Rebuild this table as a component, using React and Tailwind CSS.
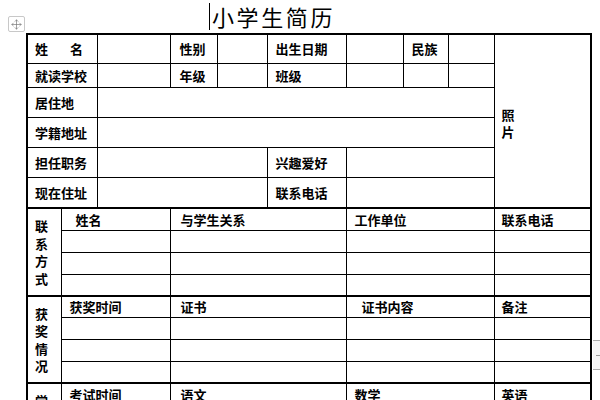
import React from 'react';
import { Move } from 'lucide-react';

const cols = [34, 36, 73, 47, 50, 79, 57, 45, 46, 97];

function C({ children, span = 1, rows = 1, pl = 'pl-[7px]', className = '' }) {
  return (
    <td
      colSpan={span}
      rowSpan={rows}
      className={`border border-black p-0 align-middle whitespace-nowrap ${pl} ${className}`}
    >
      {children}
    </td>
  );
}

function Vert({ text }) {
  return (
    <div className="flex flex-col leading-[17.5px]">
      {text.split('').map((ch, i) => (
        <span key={i}>{ch}</span>
      ))}
    </div>
  );
}

export default function App() {
  const blanks = (n) =>
    Array.from({ length: n }).map((_, i) => (
      <tr key={i} className="h-[22px]">
        <C span={2} />
        <C span={3} />
        <C span={3} />
        <C />
      </tr>
    ));

  return (
    <div className="relative w-[600px] h-[400px] overflow-hidden bg-white text-black font-['Noto_Sans_CJK_SC',sans-serif]">
      {/* 表格拖动手柄 */}
      <div className="absolute left-[8px] top-[16px] w-[17px] h-[16px] border border-[#c8c8c8] rounded-[2px] flex items-center justify-center bg-white">
        <Move className="w-[11px] h-[11px] text-[#777]" strokeWidth={1.5} />
      </div>

      {/* 右侧标尺标记 */}
      <div className="absolute left-[593px] top-[340px] w-[7px] h-[30px] border-y border-[#aaa] bg-[#f4f4f4] flex items-center justify-end">
        <div className="w-[4px] h-px bg-[#999]" />
      </div>

      <div className="h-[33px] flex items-start pl-[209px] pt-[3px]">
        <span className="w-px h-[27px] bg-black" />
        <h1 className="ml-[2px] text-[22px] leading-[27px] tracking-[2.6px] font-normal">小学生简历</h1>
      </div>

      <table className="ml-[26px] table-fixed border-collapse border-2 border-black text-[13px] leading-none font-bold">
        <colgroup>
          {cols.map((w, i) => (
            <col key={i} style={{ width: w }} />
          ))}
        </colgroup>
        <tbody>
          <tr className="h-[29px]">
            <C span={2}>
              <span className="mr-[22px]">姓</span>名
            </C>
            <C />
            <C pl="pl-[9px]">性别</C>
            <C />
            <C pl="pl-[8px]">出生日期</C>
            <C />
            <C pl="pl-[8px]">民族</C>
            <C />
            <C rows={6} pl="pl-[7px]">
              <div className="pt-[4px]">
                <Vert text="照片" />
              </div>
            </C>
          </tr>
          <tr className="h-[24px]">
            <C span={2}>就读学校</C>
            <C />
            <C pl="pl-[9px]">年级</C>
            <C />
            <C pl="pl-[8px]">班级</C>
            <C />
            <C />
            <C />
          </tr>
          <tr className="h-[30px]">
            <C span={2}>居住地</C>
            <C span={7} />
          </tr>
          <tr className="h-[30px]">
            <C span={2}>学籍地址</C>
            <C span={7} />
          </tr>
          <tr className="h-[30px]">
            <C span={2}>担任职务</C>
            <C span={3} />
            <C pl="pl-[8px]">兴趣爱好</C>
            <C span={3} />
          </tr>
          <tr className="h-[31px]">
            <C span={2}>现在住址</C>
            <C span={3} />
            <C pl="pl-[8px]">联系电话</C>
            <C span={3} />
          </tr>

          <tr className="h-[22px] border-t-2 border-black">
            <C rows={4}>
              <Vert text="联系方式" />
            </C>
            <C span={2} pl="pl-[14px]">姓名</C>
            <C span={3} pl="pl-[10px]">与学生关系</C>
            <C span={3} pl="pl-[8px]">工作单位</C>
            <C pl="pl-[7px]">联系电话</C>
          </tr>
          {blanks(3)}

          <tr className="h-[21px] border-t-2 border-black">
            <C rows={4}>
              <Vert text="获奖情况" />
            </C>
            <C span={2} pl="pl-[8px]">获奖时间</C>
            <C span={3} pl="pl-[10px]">证书</C>
            <C span={3} pl="pl-[15px]">证书内容</C>
            <C pl="pl-[7px]">备注</C>
          </tr>
          {blanks(3)}

          <tr className="h-[22px] border-t-2 border-black">
            <C rows={4}>
              <Vert text="学习成绩" />
            </C>
            <C span={2} pl="pl-[8px]">考试时间</C>
            <C span={3} pl="pl-[10px]">语文</C>
            <C span={3} pl="pl-[8px]">数学</C>
            <C pl="pl-[7px]">英语</C>
          </tr>
          {blanks(3)}
        </tbody>
      </table>
    </div>
  );
}
